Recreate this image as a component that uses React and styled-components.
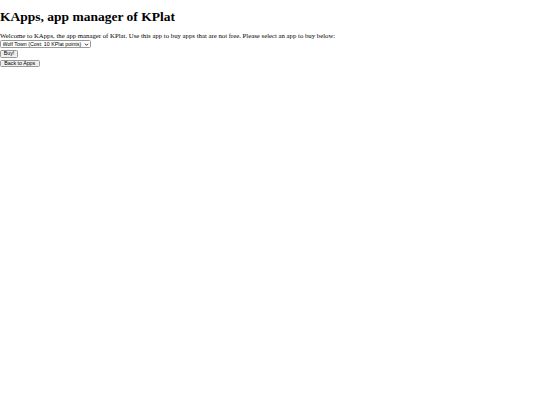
import React from 'react'
import styled, { createGlobalStyle } from 'styled-components'

const Global = createGlobalStyle`
body {
  margin: 0;
  background: #fff;
  color: #000;
  font-family: 'Liberation Serif', 'Times New Roman', serif;
}
`

const Page = styled.div`
display: flex;
flex-direction: column;
align-items: flex-start;
`

const Title = styled.h1`
font-size: 13.5px;
font-weight: bold;
margin: 9px 0 8.3px;
line-height: 15px;
`

const Intro = styled.div`
font-size: 6.75px;
line-height: 8px;
`

const arrow = "data:image/svg+xml;utf8,<svg xmlns='http://www.w3.org/2000/svg' width='8' height='8' viewBox='0 0 8 8'><path d='M1.5 2.8 L4 5.3 L6.5 2.8' fill='none' stroke='black' stroke-width='1.3'/></svg>"

const Picker = styled.select`
appearance: none;
font-family: 'Liberation Sans', Arial, sans-serif;
font-size: 5.3px;
height: 8px;
width: 91px;
padding: 0 0 0 1.5px;
margin: 0;
border: 1px solid #999;
border-radius: 1.5px;
background: #fff url("${arrow}") no-repeat right 1px center / 5px 5px;
color: #000;
outline: none;
`

const Button = styled.button`
font-family: 'Liberation Sans', Arial, sans-serif;
font-size: 5.3px;
height: 7.3px;
width: ${p => p.$w}px;
line-height: 5px;
padding: 0;
margin: 2px 0 0;
border: 1px solid #999;
border-radius: 1.5px;
background: #efefef;
color: #000;
`

const apps = [
  'Wolf Town (Cost: 10 KPlat points)',
]

const App = () => {
  return (
    <Page>
      <Global />
      <Title>KApps, app manager of KPlat</Title>
      <Intro>
        Welcome to KApps, the app manager of KPlat. Use this app to buy apps that are not free. Please select an app to buy below:
      </Intro>
      <Picker defaultValue={apps[0]}>
        {apps.map(a => <option key={a}>{a}</option>)}
      </Picker>
      <Button $w={18}>Buy!</Button>
      <Button $w={39.5}>Back to Apps</Button>
    </Page>
  )
}

export default App
